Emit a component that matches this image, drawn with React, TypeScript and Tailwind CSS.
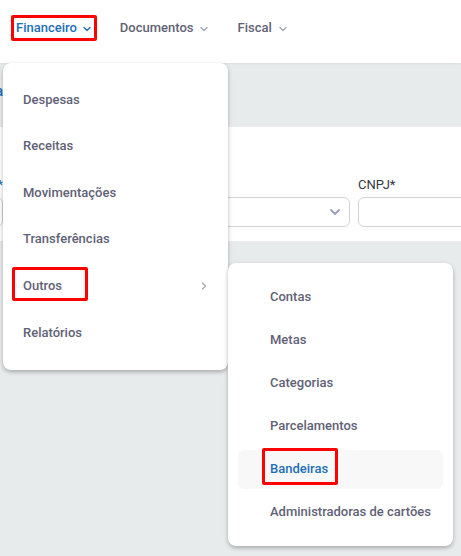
import React from "react";

const font = { fontFamily: "Roboto, 'Noto Sans', sans-serif" };

function ChevronDown({ className }: { className?: string }) {
  return (
    <svg viewBox="0 0 12 12" className={className} fill="none" stroke="currentColor" strokeWidth="1.4" strokeLinecap="round" strokeLinejoin="round">
      <path d="M3 4.5 6 7.5 9 4.5" />
    </svg>
  );
}

function ChevronRight({ className }: { className?: string }) {
  return (
    <svg viewBox="0 0 12 12" className={className} fill="none" stroke="currentColor" strokeWidth="1.3" strokeLinecap="round" strokeLinejoin="round">
      <path d="M4.5 3 7.5 6 4.5 9" />
    </svg>
  );
}

const mainItems = ["Despesas", "Receitas", "Movimentações", "Transferências", "Outros", "Relatórios"];
const subItems = ["Contas", "Metas", "Categorias", "Parcelamentos", "Bandeiras", "Administradoras de cartões"];

export default function App() {
  return (
    <div className="relative w-[461px] h-[556px] overflow-hidden bg-[#e8ebec]" style={font}>
      {/* Top nav */}
      <header className="h-[63px] bg-white flex items-center pb-[7px] pl-[16px] gap-[27px] text-[13px] font-medium shadow-[0_1px_2px_rgba(0,0,0,0.06)] relative z-10">
        <div className="relative flex items-center gap-[4px] text-[#1d6fb8]">
          <span>Financeiro</span>
          <ChevronDown className="w-[12px] h-[12px] mt-[1px]" />
          <div className="absolute -left-[5px] -right-[4px] -top-[3px] -bottom-[3px] border-[3px] border-[#ff0000] rounded-[2px]" />
        </div>
        <div className="flex items-center gap-[5px] text-[#5f6275]">
          <span>Documentos</span>
          <ChevronDown className="w-[12px] h-[12px] mt-[1px] text-[#a6a9b4]" />
        </div>
        <div className="flex items-center gap-[5px] text-[#5f6275]">
          <span>Fiscal</span>
          <ChevronDown className="w-[12px] h-[12px] mt-[1px] text-[#a6a9b4]" />
        </div>
      </header>

      {/* Page underneath */}
      <div className="flex flex-col">
        <div className="h-[64px] flex items-center">
          <div className="w-[3px] flex justify-end whitespace-nowrap text-[14px] font-medium text-[#1d6fb8] -mt-[8px]">
            Bandeira
          </div>
        </div>
        <section className="h-[114px] bg-white flex items-end pb-[14px]">
          <div className="flex items-end gap-[8px] w-full">
            <div className="w-[3px] flex justify-end whitespace-nowrap">
              <div className="flex flex-col gap-[4px]">
                <span className="text-[13px] text-[#1d6fb8] text-right leading-[16px]">Nome*</span>
                <div className="h-[30px] w-[120px] border border-[#d0d3d9] rounded-[6px]" />
              </div>
            </div>
            <div className="flex-1 h-[30px] border border-[#d0d3d9] rounded-[6px] flex items-center justify-end pr-[6px] text-[#9aa0b5] ml-[2px]">
              <ChevronDown className="w-[16px] h-[16px]" />
            </div>
            <div className="w-[103px] flex flex-col gap-[4px] shrink-0">
              <span className="text-[13px] text-[#333845] leading-[16px]">CNPJ*</span>
              <div className="h-[30px] w-[120px] border border-[#d0d3d9] rounded-[6px]" />
            </div>
          </div>
        </section>
      </div>

      {/* Main dropdown */}
      <div className="absolute left-[3px] top-[63px] w-[225px] h-[307px] bg-white rounded-[8px] shadow-[0_2px_4px_rgba(0,0,0,0.28)] pt-[13px] z-20">
        {mainItems.map((item) => (
          <div key={item} className="h-[46.6px] flex items-center pl-[20px] pr-[18px] text-[13px] font-medium text-[#5f6277]">
            <div className="relative">
              <span>{item}</span>
              {item === "Outros" && (
                <div className="absolute -left-[11px] -top-[9px] w-[76px] h-[34px] border-[3px] border-[#ff0000] rounded-[2px]" />
              )}
            </div>
            {item === "Outros" && <ChevronRight className="ml-auto w-[12px] h-[12px] text-[#a6a9b4]" />}
          </div>
        ))}
      </div>

      {/* Sub dropdown */}
      <div className="absolute left-[228px] top-[263px] w-[225px] h-[283px] bg-white rounded-[8px] shadow-[0_2px_4px_rgba(0,0,0,0.28)] pt-[14.5px] px-[10px] flex flex-col gap-[4px] z-20">
        {subItems.map((item) => {
          const active = item === "Bandeiras";
          return (
            <div
              key={item}
              className={
                active
                  ? "h-[39px] shrink-0 flex items-center pl-[32px] rounded-[6px] bg-[#f8f8f9] text-[13px] font-medium text-[#1d6fb8]"
                  : "h-[39px] shrink-0 flex items-center pl-[32px] text-[13px] font-medium text-[#5f6277]"
              }
            >
              <div className="relative">
                <span>{item}</span>
                {active && (
                  <div className="absolute -left-[8px] -top-[11px] w-[76px] h-[37px] border-[3px] border-[#ff0000] rounded-[2px]" />
                )}
              </div>
            </div>
          );
        })}
      </div>
    </div>
  );
}
